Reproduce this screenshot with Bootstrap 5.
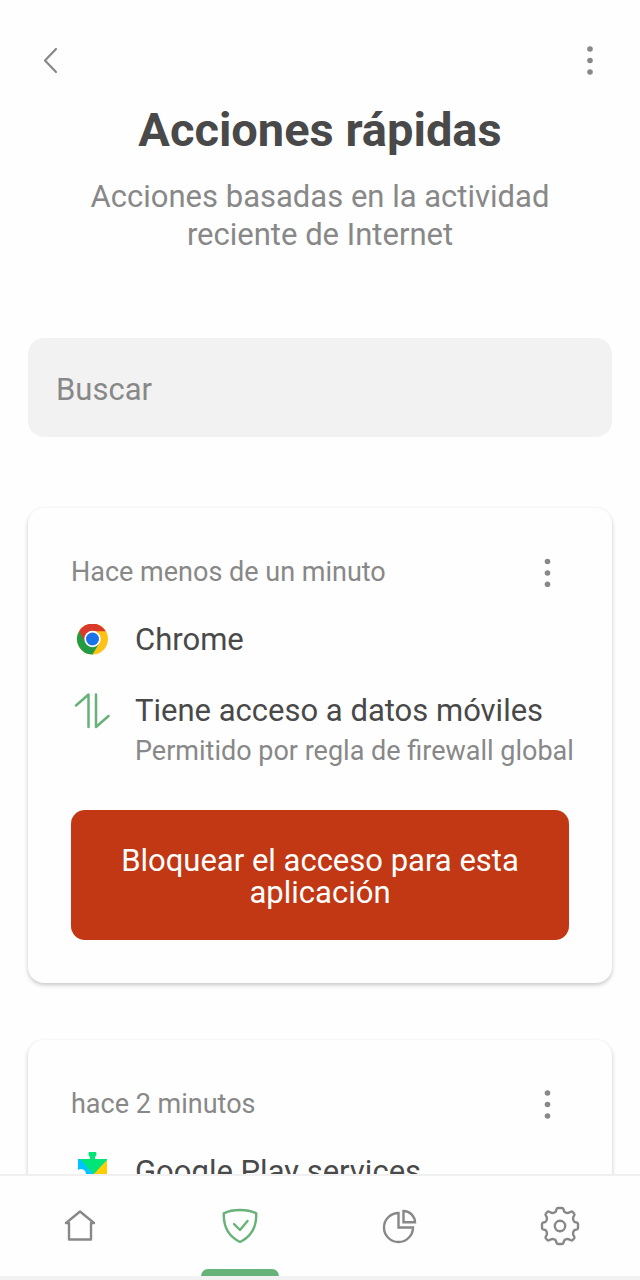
<!DOCTYPE html>
<html lang="es">
<head>
<meta charset="utf-8">
<meta name="viewport" content="width=device-width, initial-scale=1">
<title>Acciones rápidas</title>
<link href="https://cdn.jsdelivr.net/npm/bootstrap@5.3.0/dist/css/bootstrap.min.css" rel="stylesheet">
<style>
  :root { --ink: #494949; --muted: #888; --green: #67b279; --red: #c23814; }
  body { font-family: Roboto, "Liberation Sans", sans-serif; font-size: 31px; line-height: 36px; color: var(--ink); background: #fefefe; }
  svg { display: block; }
  .scroller { min-height: 0; overflow-y: auto; scrollbar-width: none; }
  .scroller::-webkit-scrollbar { display: none; }
  .gutter { padding-left: 28px; padding-right: 28px; }
  .icon-btn { width: 44px; height: 48px; padding: 0; border: 0; background: none; color: var(--muted); display: flex; align-items: center; justify-content: center; }
  .topbar { padding-top: 36px; }
  .page-title { font-size: 47px; line-height: 56px; font-weight: 700; margin: 18px 0 20px; }
  .intro { line-height: 38px; color: var(--muted); max-width: 480px; }
  .search-box, .search-box:focus { height: 99px; margin-top: 84px; padding: 4px 28px 0; border: 0; border-radius: 16px; background: #f2f2f2; font-size: 31px; box-shadow: none; }
  .search-box::placeholder { color: var(--muted); opacity: 1; }
  .action-card { --bs-card-bg: #fefefe; border: 0; border-radius: 16px; color: var(--ink); box-shadow: 0 2px 4px rgba(0, 0, 0, .22); }
  .action-card .card-body { padding: 40px 28px 43px 43px; }
  .card-list { padding-top: 71px; display: grid; gap: 57px; }
  .when, .detail { font-size: 27px; line-height: 32px; color: var(--muted); }
  .card-top { padding-right: 15px; }
  .line { gap: 21px; }
  .line-icon { width: 42px; height: 40px; flex: none; display: flex; align-items: center; justify-content: center; }
  .line-text { padding-left: 1px; }
  .app-line { margin-top: 24px; line-height: 40px; }
  .access-line { margin-top: 31px; }
  .access-name { line-height: 40px; }
  .detail { margin-top: 4px; white-space: nowrap; }
  .block-btn { --bs-btn-bg: var(--red); --bs-btn-color: #fff; --bs-btn-hover-bg: #a92f10; --bs-btn-hover-color: #fff; border: 0; border-radius: 14px; font-size: 31px; line-height: 32px; padding: 35px 32px 31px; }
  .block-wrap { margin-top: 43px; padding-right: 15px; }
  .tabs { border-top: 2px solid #f0f0f0; border-bottom: 4px solid #f3f2f2; background: #fefefe; flex: none; }
  .tab-link { height: 100px; color: var(--muted); position: relative; }
  .tab-link.active { color: var(--green); }
  .tab-link.active::after { content: ""; position: absolute; bottom: 0; left: 50%; width: 78px; height: 7px; margin-left: -39px; border-radius: 7px 7px 0 0; background: var(--green); }
</style>
</head>
<body>
<div class="d-flex flex-column vh-100">
  <main class="scroller flex-grow-1 gutter">
    <header>
      <div class="topbar d-flex justify-content-between">
        <button type="button" class="icon-btn" aria-label="Atrás">
          <svg width="20" height="28" viewBox="0 0 20 28" fill="none" stroke="currentColor" stroke-width="2.200" stroke-linecap="round" stroke-linejoin="round"><path d="M16 3 5 14.500 16 26"/></svg>
        </button>
        <button type="button" class="icon-btn" aria-label="Más opciones">
          <svg width="8" height="30" viewBox="0 0 8 30" fill="currentColor"><circle cx="4" cy="4" r="2.800"/><circle cx="4" cy="15.500" r="2.800"/><circle cx="4" cy="27" r="2.800"/></svg>
        </button>
      </div>
      <h1 class="page-title text-center">Acciones rápidas</h1>
      <p class="intro text-center mx-auto mb-0">Acciones basadas en la actividad reciente de Internet</p>
    </header>

    <input type="search" class="form-control search-box" placeholder="Buscar" aria-label="Buscar">

    <div class="card-list">
      <article class="card action-card">
        <div class="card-body">
          <div class="card-top d-flex justify-content-between align-items-center">
            <span class="when">Hace menos de un minuto</span>
            <button type="button" class="icon-btn" aria-label="Opciones de Chrome">
              <svg width="8" height="30" viewBox="0 0 8 30" fill="currentColor"><circle cx="4.500" cy="4.500" r="2.800"/><circle cx="4.500" cy="16" r="2.800"/><circle cx="4.500" cy="27.200" r="2.800"/></svg>
            </button>
          </div>
          <div class="line app-line d-flex">
            <span class="line-icon">
              <svg width="32" height="32" viewBox="0 0 32 32">
                <circle cx="16.500" cy="15" r="15.500" fill="#fcc217"/>
                <path d="M16.500 15 3.100 7.200A15.500 15.500 0 0 0 16.500 30.500l6.900-11.700z" fill="#249a42"/>
                <path d="M3.100 7.200A15.500 15.500 0 0 1 29.900 7.300H16.500l-6.700 11.500z" fill="#d93a2b"/>
                <circle cx="16.500" cy="15" r="8.200" fill="#fff"/>
                <circle cx="16.500" cy="15" r="6.500" fill="#1a73e8"/>
              </svg>
            </span>
            <span class="line-text">Chrome</span>
          </div>
          <div class="line access-line d-flex">
            <span class="line-icon">
              <svg width="36" height="36" viewBox="0 0 36 36" fill="none" stroke="#67b279" stroke-width="2.500" stroke-linecap="round" stroke-linejoin="round"><path d="M2 12.500 14.500 1.500V34M22 1.500V34L34.500 23"/></svg>
            </span>
            <div class="line-text">
              <div class="access-name">Tiene acceso a datos móviles</div>
              <div class="detail">Permitido por regla de firewall global</div>
            </div>
          </div>
          <div class="block-wrap">
            <button type="button" class="btn block-btn w-100">Bloquear el acceso para esta aplicación</button>
          </div>
        </div>
      </article>

      <article class="card action-card">
        <div class="card-body">
          <div class="card-top d-flex justify-content-between align-items-center">
            <span class="when">hace 2 minutos</span>
            <button type="button" class="icon-btn" aria-label="Opciones de Google Play services">
              <svg width="8" height="30" viewBox="0 0 8 30" fill="currentColor"><circle cx="4.500" cy="4" r="2.800"/><circle cx="4.500" cy="15.500" r="2.800"/><circle cx="4.500" cy="27" r="2.800"/></svg>
            </button>
          </div>
          <div class="line app-line d-flex">
            <span class="line-icon">
              <svg width="32" height="40" viewBox="0 0 32 40">
                <path d="M2 7h29v29H2V26a5 5 0 0 0 8-4 5 5 0 0 0-8-4z" fill="#00c3ff"/>
                <path d="M4 7h27L18 22z" fill="#00e676"/>
                <path d="M31 8v28L17 22z" fill="#ffce00"/>
                <path d="M5 36 18 23l13 13z" fill="#ff3d47"/>
                <path d="M11 7 31 7 18 22 10 14z" fill="#00e676"/>
                <path d="M14 8V5a4 4 0 1 1 5 0v3z" fill="#00e676"/>
              </svg>
            </span>
            <span class="line-text">Google Play services</span>
          </div>
        </div>
      </article>
    </div>
  </main>

  <nav class="tabs" aria-label="Principal">
    <div class="row g-0">
      <div class="col">
        <a href="#inicio" class="tab-link d-flex align-items-center justify-content-center" aria-label="Inicio">
          <svg width="40" height="40" viewBox="0 0 40 40" fill="none" stroke="currentColor" stroke-width="2.400" stroke-linecap="round" stroke-linejoin="round"><path d="M6 17 20 5.500 34 17M6 17h3v16.500h22V17h3"/></svg>
        </a>
      </div>
      <div class="col">
        <a href="#proteccion" class="tab-link active d-flex align-items-center justify-content-center" aria-label="Protección" aria-current="page">
          <svg width="40" height="40" viewBox="0 0 40 40" fill="none" stroke="currentColor" stroke-width="2.400" stroke-linecap="round" stroke-linejoin="round"><path d="M20 4c6 0 11.500 1 16.200 3.300C36.700 20.500 31.500 30.500 20 36 8.500 30.500 3.300 20.500 3.800 7.300 8.500 5 14 4 20 4z"/><path d="m14 18 6 6 7.500-9"/></svg>
        </a>
      </div>
      <div class="col">
        <a href="#estadisticas" class="tab-link d-flex align-items-center justify-content-center" aria-label="Estadísticas">
          <svg width="40" height="40" viewBox="0 0 40 40" fill="none" stroke="currentColor" stroke-width="2.400"><path d="M18.500 7A14.500 14.500 0 1 0 33 21.500H18.500z"/><path d="M23.500 5A11.500 11.500 0 0 1 35 16.300H23.500z"/></svg>
        </a>
      </div>
      <div class="col">
        <a href="#ajustes" class="tab-link d-flex align-items-center justify-content-center" aria-label="Ajustes">
          <svg width="40" height="40" viewBox="0 0 40 40" fill="none" stroke="currentColor" stroke-width="2.400" stroke-linejoin="round"><path d="M18 2h4q1 0 1.400 1l.8 2.700q1.800 1.700 4.300 1.200l2.300-1.200q1-.5 1.700.2l1.600 1.600q.7.700.2 1.700l-1.200 2.300q-.5 2.500 1.200 4.300l2.700.8q1 .4 1 1.400v4q0 1-1 1.400l-2.700.8q-1.700 1.800-1.200 4.300l1.200 2.300q.5 1-.2 1.700l-1.600 1.600q-.7.700-1.700.2l-2.300-1.200q-2.500-.5-4.300 1.200l-.8 2.700q-.4 1-1.400 1h-4q-1 0-1.400-1l-.8-2.700q-1.800-1.700-4.300-1.200l-2.300 1.200q-1 .5-1.700-.2l-1.600-1.600q-.7-.7-.2-1.700l1.200-2.300q.5-2.500-1.200-4.300L3 23.400q-1-.4-1-1.400v-4q0-1 1-1.400l2.700-.8q1.700-1.800 1.200-4.300L5.700 9.200q-.5-1 .2-1.700l1.600-1.600q.7-.7 1.700-.2l2.300 1.200q2.500.5 4.300-1.200l.8-2.700q.4-1 1.400-1z"/><circle cx="20" cy="20" r="5.200"/></svg>
        </a>
      </div>
    </div>
  </nav>
</div>
<script src="https://cdn.jsdelivr.net/npm/bootstrap@5.3.0/dist/js/bootstrap.bundle.min.js"></script>
</body>
</html>
